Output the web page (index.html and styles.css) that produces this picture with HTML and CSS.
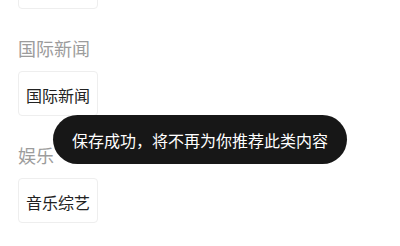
FILE: index.html
```html
<!DOCTYPE html>
<html lang="zh">
<head>
<meta charset="utf-8">
<link rel="stylesheet" href="styles.css">
</head>
<body>
<div class="page">
  <div class="card card-first"></div>
  <h2 class="section-title">国际新闻</h2>
  <div class="card"><span>国际新闻</span></div>
  <h2 class="section-title">娱乐</h2>
  <div class="card"><span>音乐综艺</span></div>
</div>
<div class="toast">保存成功，将不再为你推荐此类内容</div>
</body>
</html>
```
FILE: styles.css
```css
html, body {
  margin: 0;
  padding: 0;
  background: #ffffff;
  width: 400px;
  height: 246px;
  overflow: hidden;
  font-family: "Noto Sans CJK SC", "Noto Sans", sans-serif;
}
.page {
  display: flex;
  flex-direction: column;
  align-items: flex-start;
  padding-left: 18px;
}
.card {
  box-sizing: border-box;
  width: 80px;
  height: 45px;
  padding: 0 7px;
  border: 1px solid #eeeeee;
  border-radius: 4px;
  background: #fff;
  display: flex;
  align-items: center;
  font-size: 16px;
  font-weight: normal;
  color: #222;
  line-height: 1;
}
.card span { position: relative; top: 1px; }
.card-first {
  margin-top: -36px;
}
.section-title {
  margin: 27px 0 10px 0;
  font-size: 18px;
  font-weight: normal;
  line-height: 25px;
  height: 25px;
  color: #9c9c9c;
}
.toast {
  position: absolute;
  left: 53px;
  top: 115px;
  width: 294px;
  height: 49px;
  border-radius: 25px;
  background: #171717;
  color: #fff;
  font-size: 16px;
  font-weight: normal;
  display: flex;
  align-items: center;
  justify-content: center;
}
```
